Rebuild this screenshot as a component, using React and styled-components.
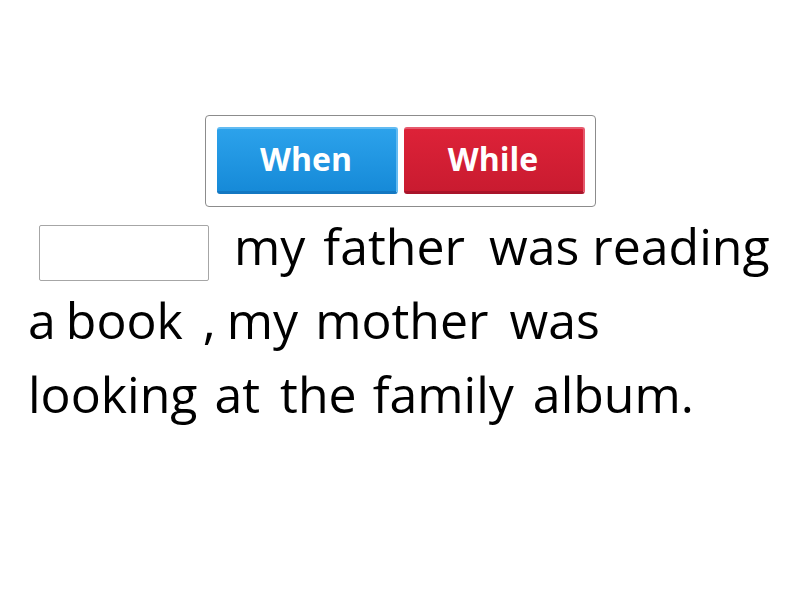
import React from 'react'
import styled, { createGlobalStyle } from 'styled-components'

const GlobalStyle = createGlobalStyle`
html, body {
    margin: 0;
    padding: 0;
    background: #fff;
}
body {
    font-family: "Open Sans", "Liberation Sans", sans-serif;
    color: #000;
}
`

const answers = [
    { label: 'When', tone: 'blue' },
    { label: 'While', tone: 'red' },
]

// gap = space before each word, in px
const lines = [
    [{ gap: 25, text: 'my' }, { gap: 18, text: 'father' }, { gap: 24, text: 'was' }, { gap: 13, text: 'reading' }],
    [{ gap: 0, text: 'a' }, { gap: 10, text: 'book' }, { gap: 20, text: ',' }, { gap: 11, text: 'my' }, { gap: 17, text: 'mother' }, { gap: 21, text: 'was' }],
    [{ gap: 0, text: 'looking' }, { gap: 17, text: 'at' }, { gap: 20, text: 'the' }, { gap: 16, text: 'family' }, { gap: 19, text: 'album.' }],
]

export default function App() {
    return (
        <Page>
            <GlobalStyle />
            <Tray>
                {answers.map(a => (
                    <AnswerButton key={a.label} tone={a.tone}>{a.label}</AnswerButton>
                ))}
            </Tray>
            <Sentence>
                {lines.map((words, i) => (
                    <Line key={i}>
                        {i === 0 && <Blank />}
                        {words.map((w, j) => (
                            <Word key={j} gap={w.gap}>{w.text}</Word>
                        ))}
                    </Line>
                ))}
            </Sentence>
        </Page>
    )
}

const Page = styled.div`
width: 800px;
height: 600px;
box-sizing: border-box;
padding-top: 115px;
display: flex;
flex-direction: column;
align-items: center;
`

const Tray = styled.div`
display: flex;
gap: 6px;
padding: 11px 10px 12px 11px;
border: 1px solid #8c8c8c;
border-radius: 4px;
`

const tones = {
    blue: { top: '#2ca2eb', bottom: '#168ad8', light: '#62bbf2', dark: '#1378c2' },
    red: { top: '#dd2238', bottom: '#c91b30', light: '#e65a6d', dark: '#a9142a' },
}

const AnswerButton = styled.div`
width: 181px;
height: 67px;
box-sizing: border-box;
display: flex;
align-items: center;
justify-content: center;
padding-bottom: 4px;
border-radius: 3px;
background: linear-gradient(${p => tones[p.tone].top}, ${p => tones[p.tone].bottom});
border-top: 2px solid ${p => tones[p.tone].light};
border-right: 2px solid ${p => tones[p.tone].light};
border-bottom: 3px solid ${p => tones[p.tone].dark};
color: #fff;
font-weight: 700;
font-size: 32px;
`

const Sentence = styled.div`
align-self: stretch;
padding: 2px 0 0 28px;
font-size: 50px;
`

const Line = styled.div`
display: flex;
align-items: center;
height: 74px;
white-space: nowrap;
`

const Blank = styled.div`
width: 170px;
height: 56px;
box-sizing: border-box;
margin: 14px 0 0 11px;
border: 1px solid #a6a6a6;
border-radius: 2px;
background: #fff;
`

const Word = styled.span`
margin-left: ${p => p.gap}px;
line-height: 1;
`
